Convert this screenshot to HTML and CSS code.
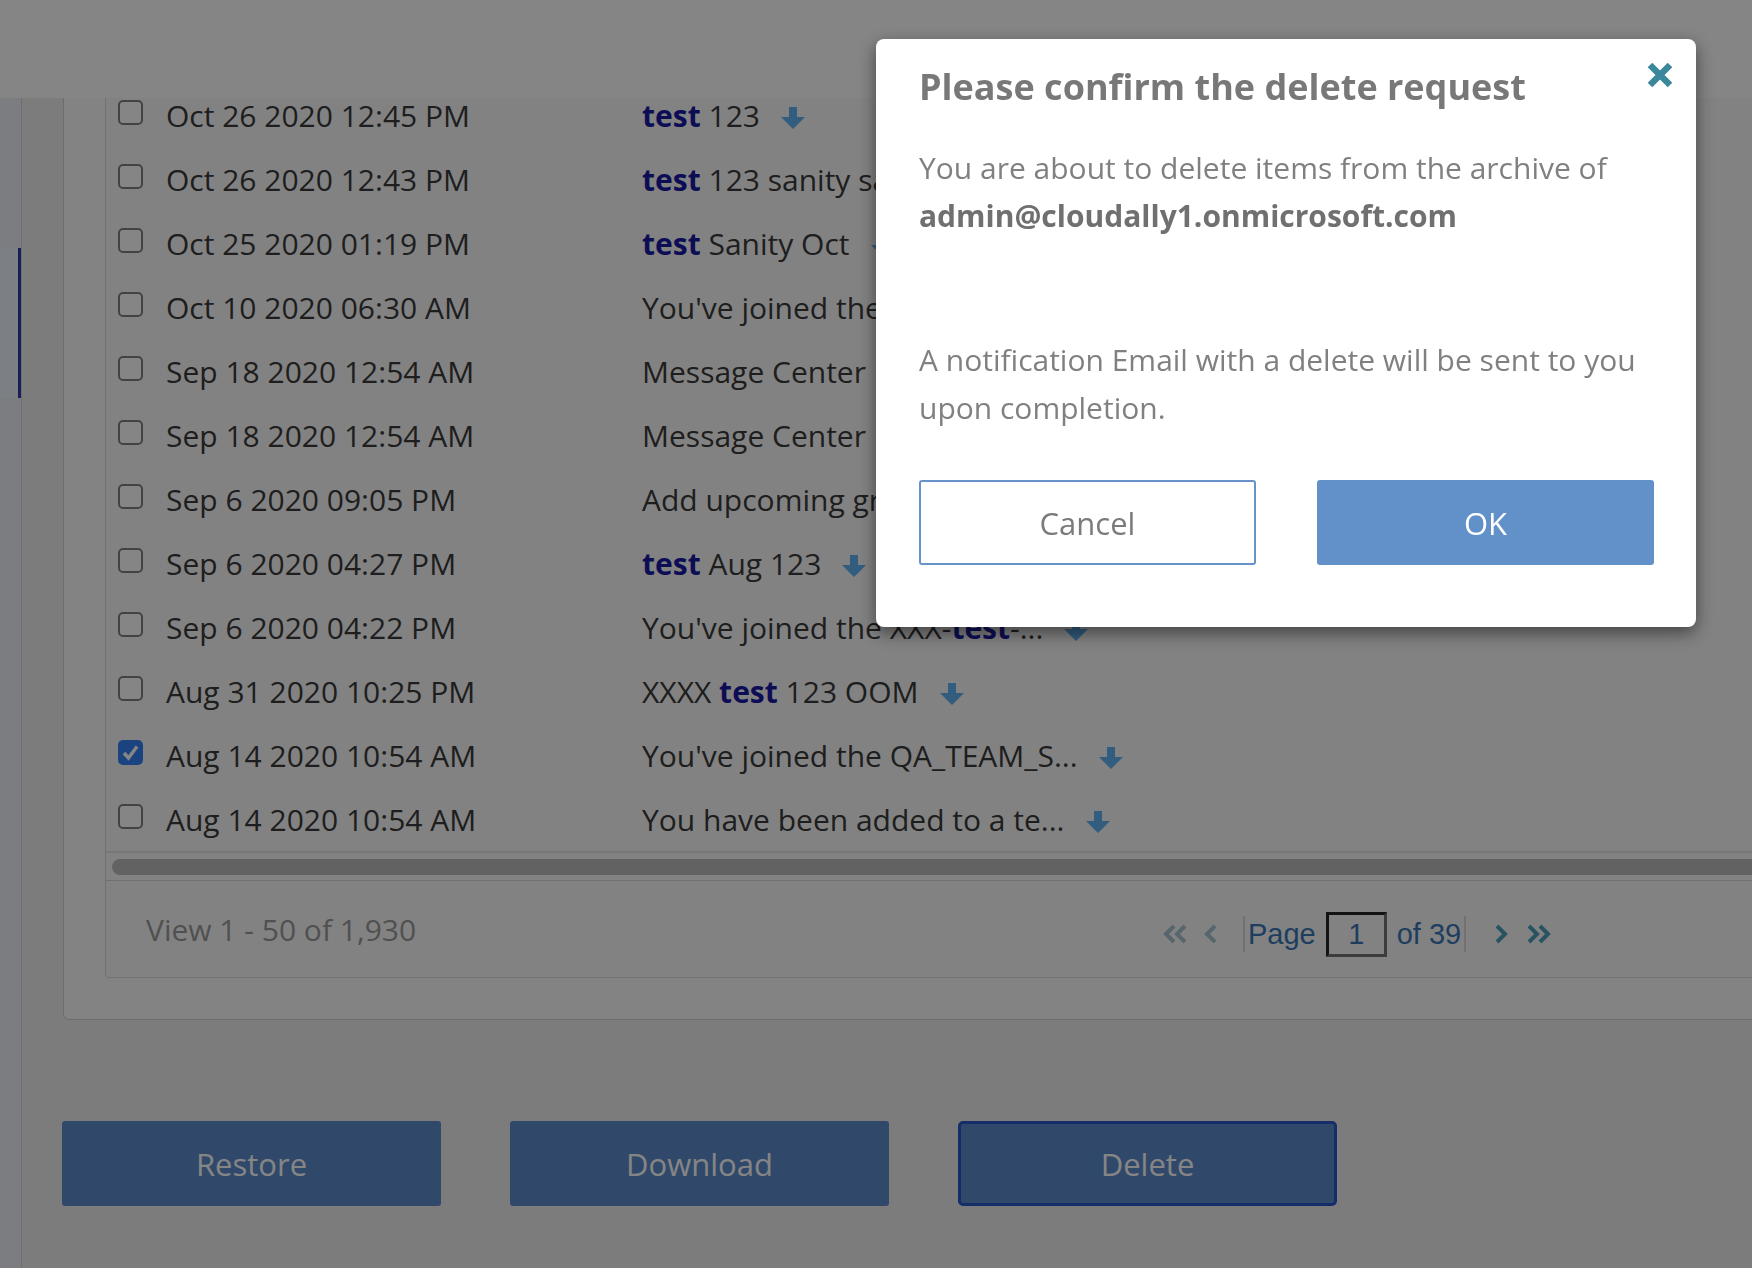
FILE: index.html
```html
<!doctype html>
<html>
<head>
    <title>Archive - Delete</title>
    <link rel="stylesheet" href="styles.css">
</head>

<body>
    <header class="topbar"></header>

    <div class="layout">
        <aside class="sidebar">
            <div class="side-active"></div>
        </aside>

        <div class="main">
            <div class="content">
                <section class="panel">
                    <div class="grid">
                        <div class="rows">
                            <!-- row 1 -->
                            <div class="row">
                                <span class="check"></span>
                                <span class="date">Oct 26 2020 12:45 PM</span>
                                <span class="subject"><b>test</b>&nbsp;123<svg class="dl" viewBox="0 0 24 22"><path d="M8 0h8v10h8L12 22 0 10h8z"/></svg></span>
                            </div>
                            <!-- row 2 -->
                            <div class="row">
                                <span class="check"></span>
                                <span class="date">Oct 26 2020 12:43 PM</span>
                                <span class="subject"><b>test</b>&nbsp;123 sanity sanity 2...<svg class="dl" viewBox="0 0 24 22"><path d="M8 0h8v10h8L12 22 0 10h8z"/></svg></span>
                            </div>
                            <!-- row 3 -->
                            <div class="row">
                                <span class="check"></span>
                                <span class="date">Oct 25 2020 01:19 PM</span>
                                <span class="subject"><b>test</b>&nbsp;Sanity Oct<svg class="dl" viewBox="0 0 24 22"><path d="M8 0h8v10h8L12 22 0 10h8z"/></svg></span>
                            </div>
                            <!-- row 4 -->
                            <div class="row">
                                <span class="check"></span>
                                <span class="date">Oct 10 2020 06:30 AM</span>
                                <span class="subject">You've joined the Sanity Te...<svg class="dl" viewBox="0 0 24 22"><path d="M8 0h8v10h8L12 22 0 10h8z"/></svg></span>
                            </div>
                            <!-- row 5 -->
                            <div class="row">
                                <span class="check"></span>
                                <span class="date">Sep 18 2020 12:54 AM</span>
                                <span class="subject">Message Center Major Upd...<svg class="dl" viewBox="0 0 24 22"><path d="M8 0h8v10h8L12 22 0 10h8z"/></svg></span>
                            </div>
                            <!-- row 6 -->
                            <div class="row">
                                <span class="check"></span>
                                <span class="date">Sep 18 2020 12:54 AM</span>
                                <span class="subject">Message Center Major Upd...<svg class="dl" viewBox="0 0 24 22"><path d="M8 0h8v10h8L12 22 0 10h8z"/></svg></span>
                            </div>
                            <!-- row 7 -->
                            <div class="row">
                                <span class="check"></span>
                                <span class="date">Sep 6 2020 09:05 PM</span>
                                <span class="subject">Add upcoming group ev...<svg class="dl" viewBox="0 0 24 22"><path d="M8 0h8v10h8L12 22 0 10h8z"/></svg></span>
                            </div>
                            <!-- row 8 -->
                            <div class="row">
                                <span class="check"></span>
                                <span class="date">Sep 6 2020 04:27 PM</span>
                                <span class="subject"><b>test</b>&nbsp;Aug 123<svg class="dl" viewBox="0 0 24 22"><path d="M8 0h8v10h8L12 22 0 10h8z"/></svg></span>
                            </div>
                            <!-- row 9 -->
                            <div class="row">
                                <span class="check"></span>
                                <span class="date">Sep 6 2020 04:22 PM</span>
                                <span class="subject">You've joined the XXX-<b>test</b>-...<svg class="dl" viewBox="0 0 24 22"><path d="M8 0h8v10h8L12 22 0 10h8z"/></svg></span>
                            </div>
                            <!-- row 10 -->
                            <div class="row">
                                <span class="check"></span>
                                <span class="date">Aug 31 2020 10:25 PM</span>
                                <span class="subject">XXXX&nbsp;<b>test</b>&nbsp;123 OOM<svg class="dl" viewBox="0 0 24 22"><path d="M8 0h8v10h8L12 22 0 10h8z"/></svg></span>
                            </div>
                            <!-- row 11 -->
                            <div class="row">
                                <span class="check checked"><svg viewBox="0 0 25 25"><path d="M6 13l4.5 5L19 6.5"/></svg></span>
                                <span class="date">Aug 14 2020 10:54 AM</span>
                                <span class="subject">You've joined the QA_TEAM_S...<svg class="dl" viewBox="0 0 24 22"><path d="M8 0h8v10h8L12 22 0 10h8z"/></svg></span>
                            </div>
                            <!-- row 12 -->
                            <div class="row">
                                <span class="check"></span>
                                <span class="date">Aug 14 2020 10:54 AM</span>
                                <span class="subject">You have been added to a te...<svg class="dl" viewBox="0 0 24 22"><path d="M8 0h8v10h8L12 22 0 10h8z"/></svg></span>
                            </div>
                        </div>

                        <div class="hscroll"><div class="thumb"></div></div>

                        <div class="pager">
                            <span class="view-count">View 1 - 50 of 1,930</span>
                            <div class="nav">
                                <svg class="chev dbl off" viewBox="0 0 27 20"><polyline points="11,2 3,10 11,18"/><polyline points="22,2 14,10 22,18"/></svg>
                                <svg class="chev one off" viewBox="0 0 15 20"><polyline points="12,2 4,10 12,18"/></svg>
                                <span class="sep"></span>
                                <span class="nav-label">Page</span>
                                <span class="page-input">1</span>
                                <span class="nav-label">of 39</span>
                                <span class="sep"></span>
                                <svg class="chev one next" viewBox="0 0 15 20"><polyline points="3,2 11,10 3,18"/></svg>
                                <svg class="chev dbl" viewBox="0 0 27 20"><polyline points="5,2 13,10 5,18"/><polyline points="16,2 24,10 16,18"/></svg>
                            </div>
                        </div>
                    </div>
                </section>

                <div class="actions">
                    <button class="btn">Restore</button>
                    <button class="btn">Download</button>
                    <button class="btn focused">Delete</button>
                </div>
            </div>
        </div>
    </div>

    <div class="backdrop"></div>

    <div class="modal">
        <svg class="close" viewBox="0 0 28 26"><path d="M4 3L24 23M24 3L4 23"/></svg>
        <h2>Please confirm the delete request</h2>
        <p>You are about to delete items from the archive of <b>admin@cloudally1.onmicrosoft.com</b></p>
        <p class="notice">A notification Email with a delete will be sent to you upon completion.</p>
        <div class="modal-buttons">
            <button class="cancel">Cancel</button>
            <button class="ok">OK</button>
        </div>
    </div>
</body>

</html>
```

FILE: styles.css
```css
html, body {
    margin: 0;
    height: 100%;
}

body {
    font-family: "Open Sans", "Liberation Sans", sans-serif;
    background-color: #eeeeee;
    color: #3a3a3a;
    overflow: hidden;
}

.topbar {
    position: relative;
    z-index: 2;
    height: 98px;
    background-color: #ffffff;
}

.layout {
    display: flex;
    height: 1170px;
}

.sidebar {
    flex: none;
    width: 21px;
    background-color: #ebf0f6;
    border-right: 1px solid #d5d5d5;
}

.side-active {
    margin-top: 150px;
    height: 150px;
    background-color: #eef4fc;
    border-right: 3px solid #2f3aa8;
}

.main {
    flex: 1;
    overflow: hidden;
    padding-left: 41px;
}

.content {
    margin-top: -15px;
}

/* grid panel */
.panel {
    width: 2700px;
    padding: 0 0 41px 41px;
    background-color: #fbfbfb;
    border: 1px solid #d2d2d2;
    border-top: none;
    border-radius: 0 0 0 6px;
}

.grid {
    background-color: #fafafa;
    border-left: 1px solid #d6d6d6;
    border-bottom: 1px solid #dedede;
    border-radius: 0 0 0 4px;
}

.rows {
    border-bottom: 2px solid #e5e5e5;
}

.row {
    display: flex;
    align-items: center;
    height: 64px;
    padding-left: 12px;
    font-size: 30px;
    white-space: nowrap;
}

.check {
    flex: none;
    box-sizing: border-box;
    width: 25px;
    height: 25px;
    margin-top: -5px;
    border: 2px solid #808080;
    border-radius: 5px;
    background-color: #ffffff;
}

.check.checked {
    border: none;
    background-color: #3580f4;
}

.check svg {
    display: block;
    width: 25px;
    height: 25px;
    fill: none;
    stroke: #ffffff;
    stroke-width: 3.5;
}

.date {
    flex: none;
    width: 476px;
    margin-left: 23px;
}

.subject {
    display: flex;
    align-items: center;
}

.subject b {
    color: #1a1aa6;
}

.dl {
    width: 24px;
    height: 22px;
    margin: 5px 0 0 21px;
    fill: #62b2f2;
}

.hscroll {
    padding: 6px 0 5px 6px;
}

.thumb {
    height: 16px;
    border-radius: 8px;
    background-color: #bcbcbc;
}

.pager {
    display: flex;
    align-items: center;
    height: 96px;
    padding-left: 40px;
    border-top: 1px solid #d3d8d3;
}

.view-count {
    width: 1017px;
    font-size: 30px;
    color: #9a9a9a;
}

.nav {
    display: flex;
    align-items: center;
    margin-top: 10px;
    font-family: "Liberation Sans", Arial, sans-serif;
    font-size: 29px;
    color: #3a77b7;
}

.chev {
    height: 20px;
    fill: none;
    stroke: #4f9fbf;
    stroke-width: 4;
}

.chev.dbl {
    width: 27px;
}

.chev.one {
    width: 15px;
    margin-left: 13px;
}

.chev.off {
    stroke: #a8c4d0;
}

.chev.next {
    margin: 0 15px 0 28px;
}

.sep {
    width: 2px;
    height: 36px;
    background-color: #d8d8d8;
}

.nav .sep:first-of-type {
    margin-left: 25px;
}

.nav-label {
    margin: 0 3px;
}

.page-input {
    box-sizing: border-box;
    width: 61px;
    height: 45px;
    margin: 0 7px;
    border: 3px solid;
    border-color: #262626 #747474 #747474 #262626;
    text-align: center;
    line-height: 39px;
}

.actions {
    display: flex;
    gap: 69px;
    margin: 101px 0 0 -1px;
}

.btn {
    box-sizing: border-box;
    width: 379px;
    height: 85px;
    border: none;
    border-radius: 3px;
    background-color: #5c8acc;
    color: #ffffff;
    font-family: "Open Sans", sans-serif;
    font-size: 31px;
}

.btn.focused {
    border: 3px solid #2a56c8;
    border-radius: 5px;
}

/* confirm dialog */
.backdrop {
    position: fixed;
    top: 0;
    left: 0;
    right: 0;
    bottom: 0;
    z-index: 5;
    background-color: rgba(0, 0, 0, 0.48);
}

.modal {
    position: fixed;
    left: 876px;
    top: 39px;
    z-index: 6;
    box-sizing: border-box;
    width: 820px;
    height: 588px;
    padding: 27px 42px 0 43px;
    background-color: #ffffff;
    border-radius: 8px;
    box-shadow: 0 6px 18px rgba(0, 0, 0, 0.5);
}

.close {
    position: absolute;
    top: 23px;
    right: 22px;
    width: 28px;
    height: 26px;
    fill: none;
    stroke: #3b879c;
    stroke-width: 6.5;
}

.modal h2 {
    margin: 0;
    font-size: 36px;
    line-height: 41px;
    font-weight: bold;
    color: #787878;
}

.modal p {
    margin: 37px 0 0;
    font-size: 30px;
    line-height: 48px;
    color: #808080;
}

.modal p b {
    color: #707070;
}

.modal p.notice {
    margin-top: 96px;
}

.modal-buttons {
    display: flex;
    gap: 61px;
    margin-top: 48px;
}

.modal-buttons button {
    box-sizing: border-box;
    width: 337px;
    height: 85px;
    border-radius: 3px;
    font-family: "Open Sans", sans-serif;
    font-size: 31px;
}

.cancel {
    border: 2px solid #6893c9;
    background-color: #ffffff;
    color: #7b7b7b;
}

.ok {
    border: none;
    background-color: #6291c9;
    color: #ffffff;
}
```
